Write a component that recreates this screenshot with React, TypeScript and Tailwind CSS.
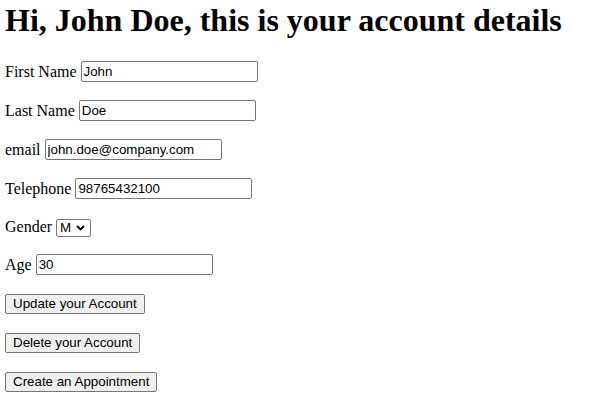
const field =
  "h-[21px] w-[177px] rounded-[2px] border border-[#767676] bg-white px-[2px] font-['Liberation_Sans',Arial,sans-serif] text-[13.333px] leading-[normal] text-black";

const button =
  "h-[20px] rounded-[2px] border border-[#767676] bg-[#efefef] px-[7px] font-['Liberation_Sans',Arial,sans-serif] text-[13.333px] leading-[normal] text-black";

function Row({ label, tall = true, children }: { label?: string; tall?: boolean; children: React.ReactNode }) {
  return (
    <div className={`my-4 flex items-center gap-[4px] leading-[normal] ${tall ? "h-[23px]" : "h-[21px]"}`}>
      {label && <span>{label}</span>}
      {children}
    </div>
  );
}

export default function App() {
  return (
    <div className="min-h-[419px] bg-white pl-[5px] pt-[2px] font-['Liberation_Serif','Times_New_Roman',serif] text-base text-black">
      <h1 className="mb-[21px] text-[32px] font-bold leading-[37px]">Hi, John Doe, this is your account details</h1>

      <Row label="First Name">
        <input className={field} defaultValue="John" />
      </Row>
      <Row label="Last Name">
        <input className={field} defaultValue="Doe" />
      </Row>
      <Row label="email">
        <input className={field} defaultValue="john.doe@company.com" />
      </Row>
      <Row label="Telephone">
        <input className={field} defaultValue="98765432100" />
      </Row>
      <Row label="Gender" tall={false}>
        <span className="relative mt-[2px] inline-block">
          <select
            defaultValue="M"
            className="block h-[18px] w-[35px] appearance-none rounded-[2px] border border-[#767676] bg-white pl-[3px] font-['Liberation_Sans',Arial,sans-serif] text-[13.333px] leading-[normal] text-black"
          >
            <option value="M">M</option>
            <option value="F">F</option>
          </select>
          <svg className="pointer-events-none absolute right-[6px] top-[6px] h-[6px] w-[9px]" viewBox="0 0 9 6" aria-hidden="true">
            <path d="M1 1l3.5 3.5L8 1" fill="none" stroke="#000" strokeWidth="1.8" />
          </svg>
        </span>
      </Row>
      <Row label="Age">
        <input className={field} defaultValue="30" />
      </Row>

      <Row>
        <button type="button" className={button}>Update your Account</button>
      </Row>
      <Row>
        <button type="button" className={button}>Delete your Account</button>
      </Row>
      <Row>
        <button type="button" className={button}>Create an Appointment</button>
      </Row>
    </div>
  );
}
